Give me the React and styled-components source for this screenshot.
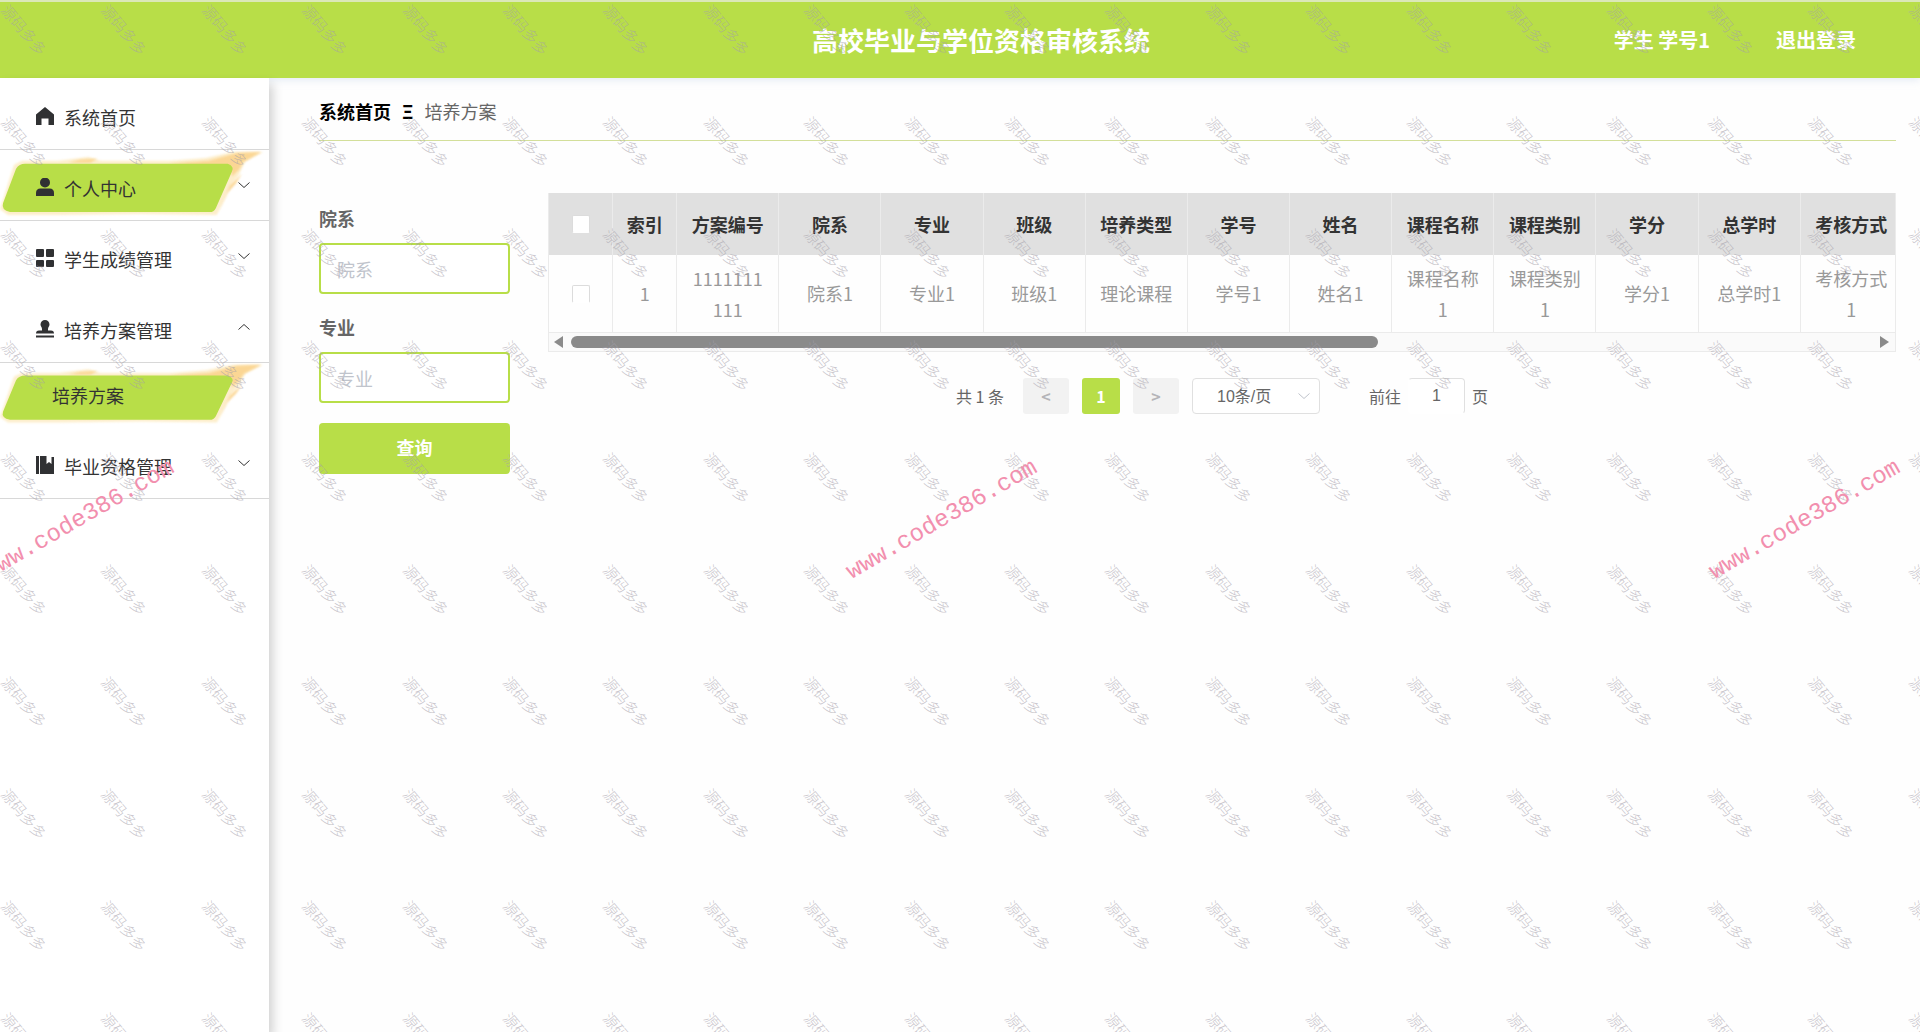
import React, { useState } from 'react';
import styled, { createGlobalStyle, ThemeProvider } from 'styled-components';

const theme = {
  primary: '#b8de48',
  text: '#333',
  textRegular: '#666',
  textLight: '#999',
  placeholder: '#c0c4cc',
  line: '#d8d8d8',
  cellLine: '#ebebeb',
  headBg: '#e0e0e0',
};

const GlobalStyle = createGlobalStyle`
  * {
    box-sizing: border-box;
  }

  body {
    margin: 0;
    background: #fefefe;
    font-family: 'Noto Sans CJK SC', 'Noto Sans', sans-serif;
    font-size: 18px;
    color: ${theme.text};
  }

  a {
    color: inherit;
    text-decoration: none;
  }

  button, input, select {
    font-family: inherit;
    font-size: inherit;
    margin: 0;
  }
`;

const Page = styled.div`
  position: relative;
  display: flex;
  flex-direction: column;
  min-height: 100vh;
  overflow: hidden;
`;

// Header
const Header = styled.header`
  display: grid;
  grid-template-columns: 1fr auto 1fr;
  align-items: center;
  height: 78px;
  padding: 0 64px 0 106px;
  background: ${(props) => props.theme.primary};
  border-top: 2px solid #dbe8b8;
  box-shadow: 0 2px 8px rgba(190, 205, 230, 0.4);
  color: #fff;
`;

const Title = styled.h1`
  grid-column: 2;
  margin: 0;
  font-size: 26px;
  line-height: 38px;
  font-weight: 700;
`;

const UserArea = styled.div`
  display: flex;
  justify-content: flex-end;
  gap: 66px;
  font-size: 20px;
  line-height: 30px;
  font-weight: 700;
`;

const LogoutButton = styled.button`
  padding: 0;
  border: none;
  background: none;
  color: inherit;
  font-weight: 700;
  line-height: 30px;
  cursor: pointer;
`;

const Body = styled.div`
  display: flex;
  flex: 1;
`;

// Sidebar
const Sidebar = styled.nav`
  flex: none;
  width: 269px;
  padding-top: 1px;
  background: #fff;
  box-shadow: 4px 6px 10px rgba(0, 0, 0, 0.18);
`;

const MenuList = styled.ul`
  margin: 0;
  padding: 0;
  list-style: none;
`;

const MenuLink = styled.a`
  position: relative;
  display: flex;
  align-items: center;
  gap: 10px;
  height: ${(props) => (props.$sub ? '65px' : '71px')};
  padding: ${(props) => (props.$sub ? '0 18px 0 52px' : '6px 19px 0 36px')};
  border-bottom: 1px solid
    ${(props) => (props.$line ? props.theme.line : 'transparent')};
  color: ${(props) => props.theme.text};
`;

const Brush = styled.svg`
  position: absolute;
  inset: 0;
  width: 100%;
  height: 100%;
`;

const Splash = styled.path`
  filter: blur(1px);
`;

const MenuIcon = styled.svg`
  position: relative;
  flex: none;
  width: 18px;
  height: 18px;
  margin-bottom: 3px;
  fill: #303133;
`;

const MenuText = styled.span`
  position: relative;
  flex: 1;
  line-height: 26px;
`;

const ArrowBox = styled.span`
  position: relative;
  display: flex;
  height: 16px;
  margin-bottom: 6px;
`;

const ArrowIcon = styled.svg`
  width: 12px;
  fill: none;
  stroke: currentColor;
`;

// Content
const Main = styled.main`
  flex: 1;
  min-width: 0;
  padding: 14px 24px 40px 50px;
`;

const Breadcrumb = styled.div`
  display: flex;
  gap: 11px;
  height: 49px;
  padding-top: 6px;
  border-bottom: 1px solid #d3df9a;
  line-height: 26px;
  color: ${(props) => props.theme.textRegular};
`;

const HomeLink = styled.a`
  color: #000;
  font-weight: 700;
`;

const Separator = styled.span`
  color: #000;
  font-weight: 700;
`;

const Content = styled.div`
  display: flex;
  align-items: flex-start;
  gap: 38px;
  margin-top: 52px;
`;

const SearchForm = styled.form`
  display: flex;
  flex-direction: column;
  flex: none;
  width: 191px;
`;

const Label = styled.label`
  line-height: 50px;
  font-weight: 700;
  color: ${(props) => props.theme.textRegular};
`;

const TextInput = styled.input`
  width: 100%;
  height: 51px;
  margin-bottom: 8px;
  padding: 0 16px;
  border: 2px solid ${(props) => props.theme.primary};
  border-radius: 4px;
  background: #fff;
  outline: none;

  &::placeholder {
    color: ${(props) => props.theme.placeholder};
  }
`;

const SearchButton = styled.button`
  height: 51px;
  margin-top: 12px;
  padding: 0 0 4px;
  border: none;
  border-radius: 4px;
  background: ${(props) => props.theme.primary};
  color: #fff;
  font-weight: 700;
  cursor: pointer;
`;

const TableArea = styled.div`
  flex: 1;
  min-width: 0;
`;

const TableWrap = styled.div`
  overflow: hidden;
  border: 1px solid ${(props) => props.theme.cellLine};
  border-top: none;
`;

const Table = styled.table`
  table-layout: fixed;
  width: 1354px;
  border-collapse: separate;
  border-spacing: 0;
  text-align: center;
`;

const Th = styled.th`
  width: ${(props) => (props.$narrow ? '64px' : '102px')};
  height: 62px;
  padding: 0;
  background: ${(props) => props.theme.headBg};
  border-right: 1px solid ${(props) => props.theme.cellLine};
  line-height: 30px;
  font-weight: 700;
  color: ${(props) => props.theme.text};
`;

const Td = styled.td`
  height: 78px;
  padding: 7px 12px;
  border-right: 1px solid ${(props) => props.theme.cellLine};
  border-bottom: 1px solid ${(props) => props.theme.cellLine};
  line-height: 31px;
  word-break: break-all;
  color: ${(props) => props.theme.textLight};
`;

const Checkbox = styled.input`
  appearance: none;
  display: block;
  width: 18px;
  height: 18px;
  margin: 0 auto;
  border: 1px solid #dcdcdc;
  border-bottom-color: #fff;
  border-radius: 2px;
  background: #fff;
`;

const ScrollBar = styled.div`
  display: flex;
  align-items: center;
  gap: 8px;
  height: 18px;
  padding: 0 6px 0 5px;
  background: #fafafa;
`;

const ScrollTrack = styled.div`
  flex: 1;
`;

const ScrollThumb = styled.div`
  width: 62%;
  height: 12px;
  border-radius: 6px;
  background: #8a8a8a;
`;

const ScrollArrow = styled.svg`
  width: 9px;
  height: 12px;
  fill: #8a8a8a;
`;

// Pagination
const Pagination = styled.div`
  display: flex;
  align-items: center;
  justify-content: center;
  gap: 13px;
  margin-top: 26px;
  font-size: 16px;
  line-height: 36px;
  color: ${(props) => props.theme.textRegular};
`;

const Total = styled.span`
  margin-right: 6px;
`;

const PageButton = styled.button`
  width: ${(props) => (props.$active ? '38px' : '46px')};
  height: 36px;
  padding: 0;
  border: none;
  border-radius: 3px;
  background: ${(props) => (props.$active ? props.theme.primary : '#f2f2f2')};
  color: ${(props) => (props.$active ? '#fff' : '#b4b4b8')};
  font-weight: 700;
`;

const SelectBox = styled.div`
  position: relative;
  color: ${(props) => props.theme.placeholder};
`;

const SizeSelect = styled.select`
  appearance: none;
  display: block;
  width: 128px;
  height: 36px;
  padding: 0 24px;
  border: 1px solid #e0e0e0;
  border-radius: 4px;
  background: #fff;
  font-family: 'Liberation Sans', 'Noto Sans CJK SC', sans-serif;
  color: ${(props) => props.theme.textRegular};
`;

const SelectArrow = styled.span`
  position: absolute;
  top: 0;
  right: 10px;
  display: flex;
  height: 36px;
  pointer-events: none;
`;

const Jumper = styled.label`
  display: flex;
  align-items: center;
  gap: 7px;
  margin-left: 36px;
`;

const JumpInput = styled.input`
  width: 57px;
  height: 36px;
  padding: 0;
  border: 1px solid #e0e0e0;
  border-left-color: #fff;
  border-bottom-color: #fff;
  border-radius: 4px;
  background: #fff;
  text-align: center;
  font-family: 'Liberation Sans', sans-serif;
  color: ${(props) => props.theme.textRegular};
`;

// Watermarks lie over the whole page and let clicks through
const MarkGrid = styled.div`
  position: absolute;
  top: 0;
  left: 0;
  right: -88px;
  display: grid;
  grid-template-columns: repeat(20, 1fr);
  grid-auto-rows: 112px;
  justify-items: start;
  pointer-events: none;
`;

const Mark = styled.span`
  height: 24px;
  margin: 18px 0 0 -6px;
  font-size: 15px;
  font-weight: 300;
  line-height: 24px;
  white-space: nowrap;
  color: rgba(165, 160, 170, 0.6);
  transform: rotate(50deg);
`;

const SiteMarks = styled.div`
  position: absolute;
  top: 502px;
  left: -353px;
  right: -317px;
  display: grid;
  grid-template-columns: repeat(3, 1fr);
  justify-items: center;
  pointer-events: none;
`;

const SiteMark = styled.span`
  font-family: 'Liberation Mono', monospace;
  font-size: 24px;
  line-height: 36px;
  color: #f28fae;
  transform: rotate(-30deg);
`;

const icons = {
  home: <path d="M9 0 18 7.5V18h-5.5v-6.5h-7V18H0V7.5z" />,
  user: (
    <>
      <circle cx="9" cy="4.5" r="5" />
      <path d="M0 18.5v-3.5q0-4.500 4.500-4.500h9q4.500 0 4.500 4.500v3.500z" />
    </>
  ),
  grid: (
    <>
      <rect width="8" height="8" rx="1" />
      <rect x="10" width="8" height="8" rx="1" />
      <rect y="11" width="8" height="7" rx="1" />
      <rect x="10" y="11" width="8" height="7" rx="1" />
    </>
  ),
  stamp: (
    <path d="M9 0a4.500 4.500 0 0 1 4.500 4.500c0 1.800-1.500 2.800-1.500 4.500v1.500h3q3 0 3 3H0q0-3 3-3h3V9c0-1.700-1.500-2.700-1.500-4.500A4.500 4.500 0 0 1 9 0zM0 15.500h18v2H0z" />
  ),
  book: <path d="M0 0h3v18H0zM4 0h6.500v8l2.500-2 2.500 2V1H18v17H4z" />,
};

const Chevron = ({ up }) => (
  <ArrowIcon viewBox="0 0 12 12">
    <path d={up ? 'M0.500 8.500 6 3.500 11.500 8.500' : 'M0.500 3.500 6 8.500 11.500 3.500'} />
  </ArrowIcon>
);

const BrushShape = () => (
  <Brush viewBox="0 0 268 71" preserveAspectRatio="none">
    <Splash
      fill="#fdeecb"
      d="M14 15 22 11 58 11 88 7 100 11 170 11 205 8 232 2 262 2 244 12 238 25 231 34 225 48 216 66 140 65 60 66 8 66 0 60z"
    />
    <Splash
      fill="#fbd694"
      d="M68 13 80 10 97 9 90 13zM168 14 208 11 236 3 260 2 243 12 238 20 231 27 230 18zM229 36 241 24 235 34 226 44 218 62z"
    />
    <path
      fill="#b8de48"
      d="M25 14H227Q234 17 231 22L215 59Q213 63 209 63H10Q1 61 3 54L16 19Q19 14 25 14z"
    />
  </Brush>
);

const menus = [
  { text: '系统首页', icon: 'home', line: true },
  { text: '个人中心', icon: 'user', line: true, active: true, arrow: 'down' },
  { text: '学生成绩管理', icon: 'grid', arrow: 'down' },
  { text: '培养方案管理', icon: 'stamp', line: true, arrow: 'up', children: ['培养方案'] },
  { text: '毕业资格管理', icon: 'book', line: true, arrow: 'down' },
];

const columns = [
  '方案编号',
  '院系',
  '专业',
  '班级',
  '培养类型',
  '学号',
  '姓名',
  '课程名称',
  '课程类别',
  '学分',
  '总学时',
  '考核方式',
];

const rows = [
  [
    '1111111111',
    '院系1',
    '专业1',
    '班级1',
    '理论课程',
    '学号1',
    '姓名1',
    '课程名称1',
    '课程类别1',
    '学分1',
    '总学时1',
    '考核方式1',
  ],
];

const SideMenu = () => (
  <Sidebar>
    <MenuList>
      {menus.map((menu) => (
        <li key={menu.text}>
          <MenuLink href="#" $line={menu.line}>
            {menu.active && <BrushShape />}
            <MenuIcon viewBox="0 0 18 18">{icons[menu.icon]}</MenuIcon>
            <MenuText>{menu.text}</MenuText>
            {menu.arrow && (
              <ArrowBox>
                <Chevron up={menu.arrow === 'up'} />
              </ArrowBox>
            )}
          </MenuLink>
          {menu.children && (
            <MenuList>
              {menu.children.map((child) => (
                <li key={child}>
                  <MenuLink href="#" $sub>
                    <BrushShape />
                    <MenuText>{child}</MenuText>
                  </MenuLink>
                </li>
              ))}
            </MenuList>
          )}
        </li>
      ))}
    </MenuList>
  </Sidebar>
);

const PlanTable = () => (
  <TableWrap>
    <Table>
      <thead>
        <tr>
          <Th $narrow>
            <Checkbox type="checkbox" aria-label="全选" />
          </Th>
          <Th $narrow>索引</Th>
          {columns.map((name) => (
            <Th key={name}>{name}</Th>
          ))}
        </tr>
      </thead>
      <tbody>
        {rows.map((row, index) => (
          <tr key={row[0]}>
            <Td>
              <Checkbox type="checkbox" aria-label="选择" />
            </Td>
            <Td>{index + 1}</Td>
            {row.map((value, i) => (
              <Td key={columns[i]}>{value}</Td>
            ))}
          </tr>
        ))}
      </tbody>
    </Table>
    <ScrollBar>
      <ScrollArrow viewBox="0 0 9 12">
        <path d="M9 0v12L0 6z" />
      </ScrollArrow>
      <ScrollTrack>
        <ScrollThumb />
      </ScrollTrack>
      <ScrollArrow viewBox="0 0 9 12">
        <path d="M0 0v12l9-6z" />
      </ScrollArrow>
    </ScrollBar>
  </TableWrap>
);

const App = () => {
  const [page, setPage] = useState('1');

  return (
    <ThemeProvider theme={theme}>
      <GlobalStyle />
      <Page>
        <Header>
          <Title>高校毕业与学位资格审核系统</Title>
          <UserArea>
            <span>学生 学号1</span>
            <LogoutButton type="button">退出登录</LogoutButton>
          </UserArea>
        </Header>
        <Body>
          <SideMenu />
          <Main>
            <Breadcrumb>
              <HomeLink href="#">系统首页</HomeLink>
              <Separator>Ξ</Separator>
              <span>培养方案</span>
            </Breadcrumb>
            <Content>
              <SearchForm onSubmit={(e) => e.preventDefault()}>
                <Label htmlFor="college">院系</Label>
                <TextInput id="college" type="text" placeholder="院系" />
                <Label htmlFor="major">专业</Label>
                <TextInput id="major" type="text" placeholder="专业" />
                <SearchButton type="submit">查询</SearchButton>
              </SearchForm>
              <TableArea>
                <PlanTable />
                <Pagination>
                  <Total>共 1 条</Total>
                  <PageButton type="button">&lt;</PageButton>
                  <PageButton type="button" $active>
                    1
                  </PageButton>
                  <PageButton type="button">&gt;</PageButton>
                  <SelectBox>
                    <SizeSelect aria-label="每页条数">
                      <option>10条/页</option>
                    </SizeSelect>
                    <SelectArrow>
                      <Chevron />
                    </SelectArrow>
                  </SelectBox>
                  <Jumper>
                    前往
                    <JumpInput
                      type="text"
                      value={page}
                      onChange={(e) => setPage(e.target.value)}
                    />
                    页
                  </Jumper>
                </Pagination>
              </TableArea>
            </Content>
          </Main>
        </Body>
        <MarkGrid aria-hidden="true">
          {Array.from({ length: 200 }, (_, i) => (
            <Mark key={i}>源码多多</Mark>
          ))}
        </MarkGrid>
        <SiteMarks aria-hidden="true">
          {[0, 1, 2].map((i) => (
            <SiteMark key={i}>www.code386.com</SiteMark>
          ))}
        </SiteMarks>
      </Page>
    </ThemeProvider>
  );
};

export default App;
